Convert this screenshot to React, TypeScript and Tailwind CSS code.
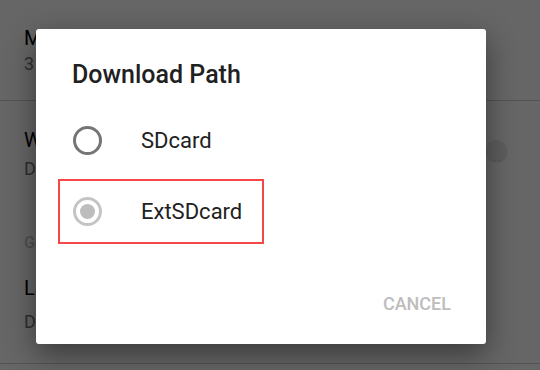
import React, { useState } from 'react';

const paths = ['SDcard', 'ExtSDcard'];

function Radio({ checked }: { checked: boolean }) {
  return (
    <span
      className={`flex h-[29px] w-[29px] shrink-0 items-center justify-center rounded-full border-[3px] ${
        checked ? 'border-[#c4c4c4]' : 'border-[#757575]'
      }`}
    >
      {checked && <span className="h-[15px] w-[15px] rounded-full bg-[#bdbdbd]" />}
    </span>
  );
}

export default function App() {
  const [selected] = useState('ExtSDcard');

  return (
    <div className="relative h-[370px] w-[540px] overflow-hidden bg-white font-['Roboto',sans-serif]">
      {/* settings list behind the dialog */}
      <div className="flex flex-col">
        <div className="px-[24px] pt-[26px] pb-[24px]">
          <div className="text-[20px] leading-[24px] text-black">Max concurrent downloads</div>
          <div className="mt-[2px] text-[18px] leading-[24px] text-[#757575]">3</div>
        </div>
        <div className="h-px bg-[#cfcfcf]" />
        <div className="flex items-start px-[24px] pt-[27px]">
          <div className="flex-1">
            <div className="text-[20px] leading-[24px] text-black">Wi-Fi only</div>
            <div className="mt-[5px] text-[18px] leading-[24px] text-[#757575]">Download only over Wi-Fi</div>
          </div>
          <div className="mt-[12px] mr-[9px] h-[21px] w-[21px] rounded-full bg-[#ececec] shadow-[0_1px_2px_rgba(0,0,0,0.2)]" />
        </div>
        <div className="mt-[52px] px-[24px] text-[16px] leading-[20px] font-medium text-[#c8c8c8]">General</div>
        <div className="px-[24px] pt-[23px]">
          <div className="text-[20px] leading-[24px] text-black">Language</div>
          <div className="mt-[10px] text-[18px] leading-[24px] text-[#757575]">Default</div>
        </div>
        <div className="mt-[29px] h-px bg-[#cfcfcf]" />
      </div>

      {/* scrim + dialog */}
      <div className="absolute inset-0 bg-black/60 pl-[36px] pt-[29px]">
        <div className="flex h-[315px] w-[450px] flex-col rounded-[3px] bg-white shadow-[0_10px_30px_rgba(0,0,0,0.45)]">
          <div className="pl-[36px] pt-[33px] text-[25px] leading-[25px] font-medium text-[#212121]">
            Download Path
          </div>
          <div className="mt-[21px] flex flex-col gap-[6px] pl-[22px]">
            {paths.map((p, i) => (
              <div
                key={p}
                className={`flex h-[65px] w-[206px] items-center border-2 pl-[13px] ${
                  i === 1 ? 'border-[#f44848]' : 'border-transparent'
                }`}
              >
                <Radio checked={selected === p} />
                <span className="ml-[39px] text-[22px] text-[#212121]">{p}</span>
              </div>
            ))}
          </div>
          <div className="mt-auto flex justify-end pr-[35px] pb-[30px]">
            <span className="text-[18px] leading-[20px] font-medium text-[#bdbdbd]">CANCEL</span>
          </div>
        </div>
      </div>
    </div>
  );
}
